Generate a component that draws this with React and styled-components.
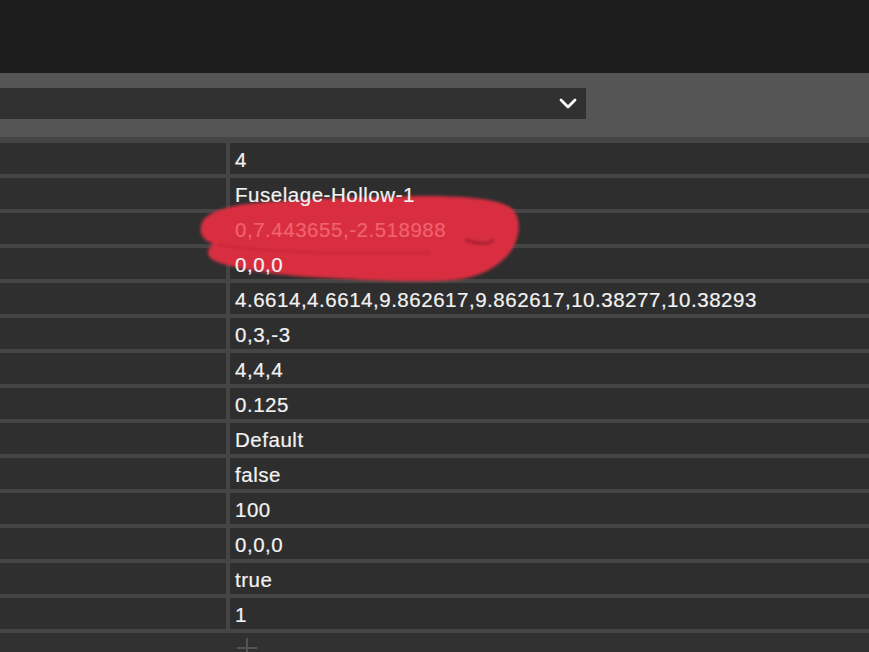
import React from "react";
import styled, { createGlobalStyle } from "styled-components";

const Global = createGlobalStyle`
  html, body { margin: 0; padding: 0; background: #2f2f2f; overflow: hidden; }
  body { font-family: "Liberation Sans", Arial, sans-serif; }
`;

const Page = styled.div`
  width: 869px;
  height: 652px;
  display: flex;
  flex-direction: column;
  position: relative;
  overflow: hidden;
`;

const TopBar = styled.div`
  height: 73px;
  background: #1d1d1d;
  flex: none;
`;

const Toolbar = styled.div`
  height: 64px;
  background: #555555;
  display: flex;
  align-items: flex-start;
  flex: none;
`;

const Select = styled.div`
  width: 586px;
  height: 31px;
  margin-top: 15px;
  background: #313131;
  display: flex;
  align-items: center;
  justify-content: flex-end;
  padding-right: 9px;
  box-sizing: border-box;
`;

const Table = styled.div`
  flex: 1;
  background: #454545;
  padding-top: 6px;
  display: grid;
  grid-template-columns: 226px 1fr;
  grid-auto-rows: 31px;
  gap: 4px;
  align-content: start;
`;

const Cell = styled.div`
  background: #2f2f2f;
`;

const ValueCell = styled.div`
  background: #2e2e2e;
  font-size: 20.5px;
  letter-spacing: 0.53px;
  line-height: 31px;
  padding-left: 5px;
  padding-top: 1px;
  box-sizing: border-box;
  white-space: nowrap;
  -webkit-text-stroke: 0.2px currentColor;
`;

const Value = styled.span`
  position: relative;
  z-index: 2;
  color: ${(p) => (p.$tint ? "#f0626f" : "#f2f2f2")};
`;

const AddRow = styled.div`
  grid-column: 1 / -1;
  height: 40px;
  background: #313131;
  display: flex;
  justify-content: flex-start;
  padding-left: 236px;
  padding-top: 4px;
  box-sizing: border-box;
`;

const Scribble = styled.svg`
  position: absolute;
  left: 0;
  top: 0;
  z-index: 1;
  pointer-events: none;
`;

const rows = [
  "4",
  "Fuselage-Hollow-1",
  "0,7.443655,-2.518988",
  "0,0,0",
  "4.6614,4.6614,9.862617,9.862617,10.38277,10.38293",
  "0,3,-3",
  "4,4,4",
  "0.125",
  "Default",
  "false",
  "100",
  "0,0,0",
  "true",
  "1",
];

export default function App() {
  return (
    <Page>
      <Global />
      <TopBar />
      <Toolbar>
        <Select>
          <svg width="18" height="12" viewBox="0 0 18 12">
            <path d="M2 2 L9 9 L16 2" fill="none" stroke="#ffffff" strokeWidth="2.8" strokeLinecap="round" strokeLinejoin="round" />
          </svg>
        </Select>
      </Toolbar>
      <Table>
        {rows.map((v, i) => (
          <React.Fragment key={i}>
            <Cell />
            <ValueCell>
              <Value $tint={i === 2}>{v}</Value>
            </ValueCell>
          </React.Fragment>
        ))}
        <AddRow>
          <svg width="22" height="22" viewBox="0 0 22 22">
            <path d="M11 1 V21 M1 11 H21" stroke="#545454" strokeWidth="2" />
          </svg>
        </AddRow>
      </Table>
      <Scribble width="869" height="652" viewBox="0 0 869 652">
        <defs>
          <filter id="soft" x="-10%" y="-10%" width="120%" height="120%">
            <feGaussianBlur stdDeviation="1.8" />
          </filter>
        </defs>
        <g filter="url(#soft)">
          <path
            d="M201 226 C203 213 225 206 255 203 C300 199 360 197 420 196 C460 196 495 198 510 207 C522 216 521 236 511 251 C501 265 482 277 455 280 C420 283 360 280 310 277 C270 274 235 269 215 261 C205 256 207 249 213 244 C204 240 199 234 201 226 Z"
            fill="#d82f40"
          />
          <path d="M466 240 C478 244 488 245 493 240" stroke="#a41f2d" strokeWidth="3" fill="none" strokeLinecap="round" />
          <path d="M218 245 C260 251 330 255 430 253" stroke="#c42636" strokeWidth="3" fill="none" opacity="0.5" />
        </g>
      </Scribble>
    </Page>
  );
}
